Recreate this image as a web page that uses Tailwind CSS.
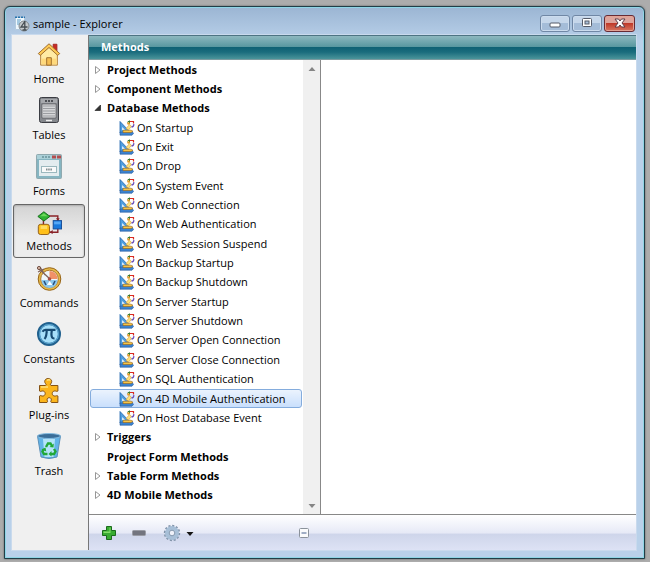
<!DOCTYPE html>
<html lang="en">
<head>
<meta charset="utf-8">
<meta name="viewport" content="width=device-width, initial-scale=1">
<title>sample - Explorer</title>
<script src="https://cdn.jsdelivr.net/npm/@tailwindcss/browser@4"></script>
</head>
<body class="flex h-screen bg-[#acacac] pt-[6px] pr-[5px] pb-[3px] pl-[4px] font-['Open_Sans','Noto_Sans',sans-serif] text-[11px] leading-4 text-black">

<svg class="hidden" aria-hidden="true">
  <symbol id="method" viewBox="0 0 16 16">
    <path d="M1 1.500 12 13H1z" fill="#4f9ee0" stroke="#2264ad" stroke-width=".8"/>
    <path d="M3.200 7 6 10H3.200z" fill="#f3faff"/>
    <path d="M1 12h12.500l1 1.500-1.500 1.700H1z" fill="#3c83cf" stroke="#24589c" stroke-width=".6"/>
    <path d="M4 10.200h8l2 1-2 1.300H4z" fill="#f7c546" stroke="#98651b" stroke-width=".6"/>
    <path d="m7 8.500 3.500-4 2 1.700L9.500 10z" fill="#ffe27a" stroke="#c28b31" stroke-width=".5"/>
    <path d="M8.300 2.300 10.500.8v3" fill="none" stroke="#377a2e"/>
    <path d="M11 1.500h3.500v2" fill="none" stroke="#d92b22" stroke-width="1.200"/>
    <path d="M14.700 4.200c.2 1.800-.7 2.800-2.200 2.800" fill="none" stroke="#6a50bb" stroke-width="1.400"/>
    <circle cx="9.500" cy="3.500" r="1.300" fill="#e89d27"/>
  </symbol>
  <symbol id="closed" viewBox="0 0 8 10"><path d="M1.500 1.500v7L6 5z" fill="#fff" stroke="#979797"/></symbol>
  <symbol id="open" viewBox="0 0 8 10"><path d="M6.500 2v5.500H1z" fill="#333" stroke="#222" stroke-width=".7"/></symbol>
</svg>

<main class="flex min-w-0 flex-1 flex-col rounded-t-[6px] border border-[#203e48] bg-[#b9d1ea] bg-linear-to-b from-[#9bb5d3] to-[#b9d1ea] to-[34px] pr-[7px] pb-[7px] pl-[6px] shadow-[inset_0_0_0_1px_#8fd5e5,0_0_2px_#555]">
  <header class="flex h-[27px] shrink-0 items-center pt-[6px] pr-[2px] pl-[3px]">
    <svg class="h-4 w-4" viewBox="0 0 16 16" aria-hidden="true">
      <path d="M1.500 1.500h9v12h-9z" fill="#eef7fd" stroke="#b3cadd"/>
      <path d="M1 1.300h10" stroke="#2673ac" stroke-width="1.600" stroke-dasharray="2 1"/>
      <path d="M3 4h4M3 6h3M3 8h3" stroke="#5b9bc4"/>
      <circle cx="10" cy="10" r="5" fill="#c4c9cc" stroke="#7f878d"/>
      <path d="M10.800 5v9M10.800 5.500 7 11h6.500M8.500 14h4" fill="none" stroke="#464d52" stroke-width="1.300"/>
    </svg>
    <h1 class="ml-[3px] flex-1">sample - Explorer</h1>
    <div class="-mt-[1px] flex gap-[2px]">
      <button aria-label="Minimize" class="flex h-[17px] w-[30px] items-center justify-center rounded-[3px] border border-[#7087a5] bg-linear-to-b from-[#c5d6ea] from-50% to-[#a4bcd8] to-50% shadow-[inset_0_0_0_1px_#ccdcee]">
        <svg class="h-3 w-3" viewBox="0 0 12 12"><rect x="1" y="6" width="10" height="4" rx="1" fill="#fff" stroke="#555b69"/></svg>
      </button>
      <button aria-label="Maximize" class="flex h-[17px] w-[30px] items-center justify-center rounded-[3px] border border-[#7087a5] bg-linear-to-b from-[#c5d6ea] from-50% to-[#a4bcd8] to-50% shadow-[inset_0_0_0_1px_#ccdcee]">
        <svg class="h-3 w-3" viewBox="0 0 12 12"><rect x="1.500" y="1.500" width="9" height="8" rx="1" fill="#fff" stroke="#555b69"/><rect x="4" y="4" width="4" height="3" fill="#aac0d9" stroke="#555b69"/></svg>
      </button>
      <button aria-label="Close" class="flex h-[17px] w-[31px] items-center justify-center rounded-[3px] border border-[#672b35] bg-linear-to-b from-[#dda49c] from-45% via-[#bf392a] via-50% to-[#d77561] shadow-[inset_0_0_0_1px_#e2a296]">
        <svg class="h-3 w-3" viewBox="0 0 12 12"><path d="M1 2h3.500L6 4l1.500-2H11L8 6l3 4H7.500L6 8l-1.500 2H1l3-4z" fill="#fff" stroke="#5c3c48"/></svg>
      </button>
    </div>
  </header>

  <div class="flex min-h-0 flex-1 border border-[#c9daed]">
    <nav aria-label="Explorer pages" class="flex w-[76px] shrink-0 flex-col gap-[2px] bg-[#f0f0f0] pt-[1px] pr-[3px] pl-[1px]">
      <button class="flex h-[54px] flex-col items-center pt-[5px]">
        <svg class="h-[26px] w-[26px]" viewBox="0 0 28 28" aria-hidden="true">
          <path d="M18.500 3.500h4v8h-4z" fill="#c92a22" stroke="#a32420"/>
          <path d="M5 14 14 6l9 8v12H5z" fill="#ffeaa4" stroke="#b07b35"/>
          <path d="M6 19h16v6H6z" fill="#ffd97c"/>
          <path d="M11.500 18h5v8h-5z" fill="#f5bd50" stroke="#9b6a2b"/>
          <path d="M2.500 13.500 14 3l11.500 10.500-2 2L14 7l-9.500 8.500z" fill="#ffcb55" stroke="#96632a"/>
        </svg>
        <span class="mt-[4px]">Home</span>
      </button>
      <button class="flex h-[54px] flex-col items-center pt-[4px]">
        <svg class="h-7 w-7" viewBox="0 0 28 28" aria-hidden="true">
          <rect x="4.500" y="1.500" width="19" height="25" rx="2" fill="#85888d" stroke="#3b3d43"/>
          <path d="M6 3h16v4H6z" fill="#a6a8ac"/>
          <path d="M10 5h8" stroke="#33353a" stroke-width="1.500" stroke-dasharray="2 1"/>
          <path d="M7 8h14v14H7z" fill="#d5d6d8" stroke="#56585d" stroke-width=".7"/>
          <path d="M8 10h12M8 12.500h12M8 15h12M8 17.500h12M8 20h12" stroke="#9b9da1"/>
          <path d="M11 24.500h6" stroke="#eee" stroke-width="1.500"/>
        </svg>
        <span class="mt-[3px]">Tables</span>
      </button>
      <button class="flex h-[54px] flex-col items-center pt-[4px]">
        <svg class="h-7 w-7" viewBox="0 0 28 28" aria-hidden="true">
          <rect x="1.500" y="2.500" width="25" height="24" rx="1" fill="#86b5c1" stroke="#8fa9af"/>
          <path d="M2 3h24v4H2z" fill="#aad0d8"/>
          <path d="M7 5h9" stroke="#6b929b" stroke-width="1.500" stroke-dasharray="2 1"/>
          <path d="M17 3.500h4v3h-4zM22 3.500h4v3h-4z" fill="#b34d4e"/>
          <path d="M4 8h20v16H4z" fill="#e3ecef"/>
          <rect x="6.500" y="14.500" width="15" height="6" fill="#f9fafa" stroke="#9bb8be"/>
          <path d="M11 17.500h6" stroke="#7f8b8f" stroke-width="2" stroke-dasharray="1.500 .7"/>
        </svg>
        <span class="mt-[3px]">Forms</span>
      </button>
      <button aria-current="page" class="flex h-[54px] flex-col items-center rounded-[3px] border border-[#666] bg-linear-to-b from-[#d3d3d3] to-[#ededed] to-60% pt-[4px] shadow-[inset_0_1px_2px_#aaa]">
        <svg class="h-[26px] w-[26px]" viewBox="0 0 28 28" aria-hidden="true">
          <path d="M14 7.500h9.500V13M23.500 20v5H13M8 11v6" fill="none" stroke="#8a2328" stroke-width="1.500"/>
          <path d="m21.500 10 2 3 2-3zM18 22.500 14.500 25l3.500 2z" fill="#8a2328"/>
          <path d="M8.500 3 15 8l-6.500 5L2 8z" fill="#2eb431" stroke="#126818"/>
          <path d="m4.500 7.800 4-3.300 4 3.300z" fill="#6bd85b"/>
          <rect x="18.500" y="12.500" width="9" height="9" fill="#1979dd" stroke="#154b95"/>
          <path d="M19.500 13.500h7v3h-7z" fill="#55a7f5"/>
          <rect x="2.500" y="16.500" width="12" height="11" rx="2.500" fill="#ffc01a" stroke="#8c5a16"/>
          <path d="M5 18h7v3.500H5z" fill="#ffdc61"/>
        </svg>
        <span class="mt-[3px]">Methods</span>
      </button>
      <button class="flex h-[54px] flex-col items-center pt-[4px]">
        <svg class="h-7 w-7" viewBox="0 0 28 28" aria-hidden="true">
          <circle cx="14.500" cy="15" r="11.300" fill="#e5b948" stroke="#976417"/>
          <circle cx="14.500" cy="15" r="8.800" fill="#f0f7fb" stroke="#ad782b"/>
          <path d="M14.500 15V7a8 8 0 0 1 8 8z" fill="#f19167"/>
          <path d="M14.500 16h8a8 8 0 0 1-16 0z" fill="#8cc8ec"/>
          <path d="m9 17 2 4M20 17l-2 4" stroke="#294f7c" stroke-width="1.600"/>
          <path d="m12 21 2.500-4 3 4z" fill="#fff"/>
          <path d="M3 4 15 15M5 3l5 8M3 8l6-3" fill="none" stroke="#80645a" stroke-width="1.300"/>
          <circle cx="4" cy="4" r="1.600" fill="#d8b4a3" stroke="#745447"/>
          <circle cx="14.500" cy="15" r="1.800" fill="#a94d44"/>
        </svg>
        <span class="mt-[3px]">Commands</span>
      </button>
      <button class="flex h-[54px] flex-col items-center pt-[4px]">
        <svg class="h-7 w-7" viewBox="0 0 28 28" aria-hidden="true">
          <circle cx="14" cy="14" r="11" fill="#7bc9f1" stroke="#21618e" stroke-width="2"/>
          <circle cx="14" cy="14" r="9.300" fill="#a7e0fa" stroke="#4089b7"/>
          <path d="M7.500 11.800c.8-1.600 1.500-2 3-2h10M11.700 10c0 4-.3 7-2.200 9M16.800 10c-.7 5-.7 8.500 2.700 8.500" fill="none" stroke="#174b73" stroke-width="2.200"/>
        </svg>
        <span class="mt-[3px]">Constants</span>
      </button>
      <button class="flex h-[54px] flex-col items-center pt-[4px]">
        <svg class="h-7 w-7" viewBox="0 0 28 28" aria-hidden="true">
          <path d="M4.500 9.500h6c1.800-.8-.8-2-.8-4 0-4 7-4 7 0 0 2-2.500 3.200-.8 4h7v5.500c-1 1.200-2-.5-3.800 0-2.500.7-2.500 4.300 0 5 1.800.4 2.800-1 3.800 0v6.500h-6.500c-1.500-1 .5-2-.2-3.700-.8-1.500-3.200-1.500-4 0-.7 1.700 1.300 2.700-.2 3.700H4.500V20c1-1.200 2 .5 3.800 0 2.500-.7 2.500-4.300 0-5-1.800-.5-2.800 1.200-3.800 0z" fill="#fbb51c" stroke="#845214"/>
          <path d="M6 11h7M12 4.500c.8-1 2.500-1 3.200 0" fill="none" stroke="#ffe17b" stroke-width="1.300"/>
        </svg>
        <span class="mt-[3px]">Plug-ins</span>
      </button>
      <button class="flex h-[54px] flex-col items-center pt-[4px]">
        <svg class="h-7 w-7" viewBox="0 0 28 28" aria-hidden="true">
          <path d="M2.500 4h23L22 25q-8 3-16 0z" fill="#62b4e8" stroke="#5b8fb8"/>
          <path d="M8 7h12l-1.500 18h-9z" fill="#b4e4fa"/>
          <ellipse cx="14" cy="4" rx="11.500" ry="2.500" fill="#3a6e99" stroke="#86bce0"/>
          <path d="m11 15 2-3.500h2.500L17 14M19 17l1.500 2.500L19 22h-3M12.500 22H9l-1.500-2.500L9 17" fill="none" stroke="#22a838" stroke-width="2.400"/>
          <path d="m14.500 15 4 .5.300-4zM16.500 19v5.500l-3-2.500zM6.500 17.500l4-2 .8 4z" fill="#22a838"/>
        </svg>
        <span class="mt-[3px]">Trash</span>
      </button>
    </nav>

    <section class="flex min-w-0 flex-1 flex-col border-l border-[#777]">
      <h2 class="flex h-[25px] shrink-0 items-center border-y border-t-[#4d7483] border-b-[#7b9ba0] pb-[2px] pl-[12px] font-bold text-white [background-image:linear-gradient(#8db8bf,#57979f_48%,#0f6274_50%,#1a6c7d_70%,#4a949a)]">Methods</h2>

      <div class="flex min-h-0 flex-1 bg-white">
        <ul class="flex w-[214px] shrink-0 flex-col pb-[9px] pl-[1px] *:flex *:min-h-0 *:flex-1">
          <li><button class="flex flex-1 items-center pl-[4px] font-bold"><svg class="mr-[5px] h-[10px] w-2"><use href="#closed"/></svg>Project Methods</button></li>
          <li><button class="flex flex-1 items-center pl-[4px] font-bold"><svg class="mr-[5px] h-[10px] w-2"><use href="#closed"/></svg>Component Methods</button></li>
          <li><button class="flex flex-1 items-center pl-[4px] font-bold"><svg class="mr-[5px] h-[10px] w-2"><use href="#open"/></svg>Database Methods</button></li>
          <li><button class="flex flex-1 items-center pl-[29px]"><svg class="mr-[2px] h-4 w-4"><use href="#method"/></svg>On Startup</button></li>
          <li><button class="flex flex-1 items-center pl-[29px]"><svg class="mr-[2px] h-4 w-4"><use href="#method"/></svg>On Exit</button></li>
          <li><button class="flex flex-1 items-center pl-[29px]"><svg class="mr-[2px] h-4 w-4"><use href="#method"/></svg>On Drop</button></li>
          <li><button class="flex flex-1 items-center pl-[29px]"><svg class="mr-[2px] h-4 w-4"><use href="#method"/></svg>On System Event</button></li>
          <li><button class="flex flex-1 items-center pl-[29px]"><svg class="mr-[2px] h-4 w-4"><use href="#method"/></svg>On Web Connection</button></li>
          <li><button class="flex flex-1 items-center pl-[29px]"><svg class="mr-[2px] h-4 w-4"><use href="#method"/></svg>On Web Authentication</button></li>
          <li><button class="flex flex-1 items-center pl-[29px]"><svg class="mr-[2px] h-4 w-4"><use href="#method"/></svg>On Web Session Suspend</button></li>
          <li><button class="flex flex-1 items-center pl-[29px]"><svg class="mr-[2px] h-4 w-4"><use href="#method"/></svg>On Backup Startup</button></li>
          <li><button class="flex flex-1 items-center pl-[29px]"><svg class="mr-[2px] h-4 w-4"><use href="#method"/></svg>On Backup Shutdown</button></li>
          <li><button class="flex flex-1 items-center pl-[29px]"><svg class="mr-[2px] h-4 w-4"><use href="#method"/></svg>On Server Startup</button></li>
          <li><button class="flex flex-1 items-center pl-[29px]"><svg class="mr-[2px] h-4 w-4"><use href="#method"/></svg>On Server Shutdown</button></li>
          <li><button class="flex flex-1 items-center pl-[29px]"><svg class="mr-[2px] h-4 w-4"><use href="#method"/></svg>On Server Open Connection</button></li>
          <li><button class="flex flex-1 items-center pl-[29px]"><svg class="mr-[2px] h-4 w-4"><use href="#method"/></svg>On Server Close Connection</button></li>
          <li><button class="flex flex-1 items-center pl-[29px]"><svg class="mr-[2px] h-4 w-4"><use href="#method"/></svg>On SQL Authentication</button></li>
          <li><button aria-current="true" class="mr-[1px] flex flex-1 items-center rounded-[3px] border border-[#84acdd] bg-linear-to-b from-[#ebf3fd] to-[#c9dffc] pl-[28px] whitespace-nowrap"><svg class="mr-[2px] h-4 w-4"><use href="#method"/></svg>On 4D Mobile Authentication</button></li>
          <li><button class="flex flex-1 items-center pl-[29px]"><svg class="mr-[2px] h-4 w-4"><use href="#method"/></svg>On Host Database Event</button></li>
          <li><button class="flex flex-1 items-center pl-[4px] font-bold"><svg class="mr-[5px] h-[10px] w-2"><use href="#closed"/></svg>Triggers</button></li>
          <li><button class="flex flex-1 items-center pl-[17px] font-bold">Project Form Methods</button></li>
          <li><button class="flex flex-1 items-center pl-[4px] font-bold"><svg class="mr-[5px] h-[10px] w-2"><use href="#closed"/></svg>Table Form Methods</button></li>
          <li><button class="flex flex-1 items-center pl-[4px] font-bold"><svg class="mr-[5px] h-[10px] w-2"><use href="#closed"/></svg>4D Mobile Methods</button></li>
        </ul>
        <div class="flex w-[17px] shrink-0 flex-col justify-between bg-[#f0f0f0]">
          <button aria-label="Scroll up" class="flex h-[17px] items-center justify-center"><svg class="h-2 w-2" viewBox="0 0 8 8"><path d="M.5 6 4 2l3.500 4z" fill="#858585"/></svg></button>
          <button aria-label="Scroll down" class="flex h-[17px] items-center justify-center"><svg class="h-2 w-2" viewBox="0 0 8 8"><path d="M.5 2 4 6l3.500-4z" fill="#858585"/></svg></button>
        </div>
        <div class="flex-1 border-l border-[#888]"></div>
      </div>

      <footer class="flex h-[36px] shrink-0 items-center border-t border-[#888] pl-[12px] [background-image:linear-gradient(#fff,#e6e9f6_52%,#ced5ea_54%,#dde2f5)]">
        <button aria-label="Add"><svg class="h-4 w-4" viewBox="0 0 16 16"><path d="M5.500 1.500h5v4h4v5h-4v4h-5v-4h-4v-5h4z" fill="#37ac31" stroke="#1b6b1c"/><path d="M6.500 2.500h2v4h-6v1.500h7v-5.500" fill="#84dc69"/></svg></button>
        <button aria-label="Remove" class="ml-[14px]"><svg class="h-4 w-4" viewBox="0 0 16 16"><rect x="1.500" y="5.500" width="13" height="5" rx="1" fill="#73757f" stroke="#9a9ca5"/></svg></button>
        <button aria-label="Options" class="ml-[16px] flex items-center"><svg class="h-[18px] w-[18px]" viewBox="0 0 18 18"><circle cx="9" cy="9" r="7" fill="none" stroke="#8093a9" stroke-width="2.400" stroke-dasharray="2 1.660"/><circle cx="9" cy="9" r="5" fill="none" stroke="#a7bfd7" stroke-width="4"/><circle cx="9" cy="9" r="2.800" fill="#eef1f9" stroke="#8398ae"/></svg><svg class="ml-[5px] h-2 w-2" viewBox="0 0 8 8"><path d="M.5 3h7L4 7z" fill="#151515"/></svg></button>
        <button aria-label="Collapse" class="ml-[105px]"><svg class="h-[10px] w-[10px]" viewBox="0 0 10 10"><rect x=".5" y=".5" width="9" height="9" rx="1" fill="#fafbfc" stroke="#8b929b"/><path d="M2.500 5h5" stroke="#46618e"/></svg></button>
      </footer>
    </section>
  </div>
</main>
</body>
</html>
